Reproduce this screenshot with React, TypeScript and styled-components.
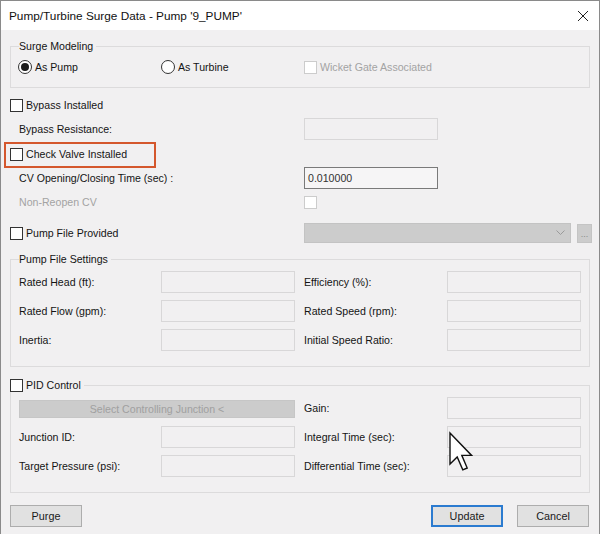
import React from 'react';
import styled, { createGlobalStyle } from 'styled-components';

const GlobalStyle = createGlobalStyle`
  html, body {
    margin: 0;
    padding: 0;
    background: #f0eff0;
  }
  * {
    box-sizing: border-box;
  }
`;

const Window = styled.div`
  position: relative;
  width: 600px;
  height: 534px;
  background: #f1f0f1;
  border: 1px solid #8a8a8a;
  border-bottom: none;
  font-family: 'Liberation Sans', Arial, sans-serif;
  font-size: 10.6px;
  color: #141414;
  overflow: hidden;
`;

const TitleBar = styled.div`
  height: 29px;
  background: #ffffff;
  display: flex;
  align-items: center;
  justify-content: space-between;
  padding: 0 10px 0 8px;
`;

const Title = styled.div`
  font-size: 11.8px;
  color: #111;
`;

const Body = styled.div`
  padding: 0 10px 0 9px;
  display: flex;
  flex-direction: column;
`;

const GroupBox = styled.div<{ $top: number; $h: number }>`
  position: relative;
  margin-top: ${(p) => p.$top}px;
  height: ${(p) => p.$h}px;
  width: 580px;
  border: 1px solid #dcdbdc;
  padding: 0 8px 0 8px;
`;

const Caption = styled.div<{ $left: number }>`
  position: absolute;
  top: -8px;
  left: ${(p) => p.$left}px;
  padding-right: 3px;
  background: #f1f0f1;
  line-height: 14px;
  display: flex;
  align-items: center;
  gap: 3px;
`;

const RadioRow = styled.div`
  margin-top: 9px;
  margin-left: -1px;
  display: grid;
  grid-template-columns: 143px 143px 1fr;
  height: 22px;
  align-items: center;
`;

const Option = styled.label<{ $disabled?: boolean }>`
  display: flex;
  align-items: center;
  gap: 3px;
  color: ${(p) => (p.$disabled ? '#a3a3a3' : '#141414')};
`;

const Radio = styled.span<{ $checked?: boolean }>`
  width: 14px;
  height: 14px;
  border-radius: 50%;
  border: 1px solid #333;
  background: #fff;
  display: flex;
  align-items: center;
  justify-content: center;
  &::after {
    content: '';
    display: ${(p) => (p.$checked ? 'block' : 'none')};
    width: 8px;
    height: 8px;
    border-radius: 50%;
    background: #1a1a1a;
  }
`;

const Check = styled.span<{ $disabled?: boolean }>`
  display: inline-block;
  width: 13px;
  height: 13px;
  border: 1px solid ${(p) => (p.$disabled ? '#cccccc' : '#333333')};
  background: #fff;
  flex-shrink: 0;
`;

const Row = styled.div<{ $top?: number }>`
  position: relative;
  margin-top: ${(p) => p.$top ?? 0}px;
  height: 24px;
  display: grid;
  grid-template-columns: 294px 1fr;
  align-items: center;
`;

const Indent = styled.span<{ $disabled?: boolean }>`
  padding-left: 9px;
  color: ${(p) => (p.$disabled ? '#a3a3a3' : '#141414')};
`;

const Highlight = styled.div`
  position: absolute;
  left: -6px;
  top: 0;
  width: 152px;
  height: 26px;
  border: 2px solid #d4572d;
  pointer-events: none;
`;

const TextBox = styled.div<{ $enabled?: boolean; $w?: number }>`
  width: ${(p) => p.$w ?? 134}px;
  height: 22px;
  border: 1px solid ${(p) => (p.$enabled ? '#7a7a7a' : '#d8d7d8')};
  background: ${(p) => (p.$enabled ? '#f6f5f6' : '#f1f0f1')};
  padding: 0 3px;
  display: flex;
  align-items: center;
  font-size: 10.6px;
  color: #333;
`;

const ComboWrap = styled.div`
  display: flex;
  align-items: center;
  gap: 6px;
`;

const Combo = styled.div`
  width: 267px;
  height: 20px;
  background: #cccccc;
  border: 1px solid #c3c3c3;
  display: flex;
  align-items: center;
  justify-content: flex-end;
  padding-right: 5px;
`;

const DotsButton = styled.div`
  width: 15px;
  height: 19px;
  background: #cccccc;
  border: 1px solid #c4c4c4;
  color: #8a8a8a;
  font-size: 9px;
  display: flex;
  align-items: flex-end;
  justify-content: center;
  padding-bottom: 3px;
  line-height: 1;
`;

const FieldGrid = styled.div`
  margin-top: 11px;
  display: grid;
  grid-template-columns: 142px 134px 9px 143px 134px;
  grid-auto-rows: 22px;
  row-gap: 7px;
  align-items: center;
`;

const FieldLabel = styled.span`
  color: #141414;
`;

const Spacer = styled.span``;

const JunctionButton = styled.div`
  grid-column: 1 / 3;
  height: 18px;
  background: #cccccc;
  color: #a0a0a0;
  display: flex;
  align-items: center;
  justify-content: center;
  border: 1px solid #c6c6c6;
  margin-top: 1px;
`;

const Footer = styled.div`
  margin-top: 12px;
  display: flex;
  align-items: center;
`;

const Button = styled.div<{ $default?: boolean }>`
  width: 72px;
  height: 22px;
  background: #e1e1e1;
  border: ${(p) => (p.$default ? '2px solid #2b7bd0' : '1px solid #adadad')};
  display: flex;
  align-items: center;
  justify-content: center;
  color: #1a1a1a;
  font-size: 10.8px;
`;

const FooterGap = styled.div`
  flex: 1;
`;

const ButtonGap = styled.div`
  width: 14px;
`;

const Cursor = styled.svg`
  position: absolute;
  left: 447px;
  top: 430px;
`;

const CloseIcon = () => (
  <svg width="12" height="12" viewBox="0 0 12 12">
    <path d="M1 1 L11 11 M11 1 L1 11" stroke="#222" strokeWidth="1" fill="none" />
  </svg>
);

const Chevron = () => (
  <svg width="9" height="6" viewBox="0 0 9 6">
    <path d="M0.5 0.5 L4.5 4.5 L8.5 0.5" stroke="#9a9a9a" strokeWidth="1" fill="none" />
  </svg>
);

const pumpFields = [
  ['Rated Head (ft):', 'Efficiency (%):'],
  ['Rated Flow (gpm):', 'Rated Speed (rpm):'],
  ['Inertia:', 'Initial Speed Ratio:'],
];

const pidFields = [
  ['Junction ID:', 'Integral Time (sec):'],
  ['Target Pressure (psi):', 'Differential Time (sec):'],
];

export default function App() {
  return (
    <>
      <GlobalStyle />
      <Window>
        <TitleBar>
          <Title>Pump/Turbine Surge Data - Pump '9_PUMP'</Title>
          <CloseIcon />
        </TitleBar>
        <Body>
          <GroupBox $top={16} $h={42}>
            <Caption $left={8}>Surge Modeling</Caption>
            <RadioRow>
              <Option>
                <Radio $checked />
                As Pump
              </Option>
              <Option>
                <Radio />
                As Turbine
              </Option>
              <Option $disabled>
                <Check $disabled />
                Wicket Gate Associated
              </Option>
            </RadioRow>
          </GroupBox>

          <Row $top={5}>
            <Option>
              <Check />
              Bypass Installed
            </Option>
          </Row>
          <Row>
            <Indent>Bypass Resistance:</Indent>
            <TextBox />
          </Row>
          <Row $top={1}>
            <Option>
              <Check />
              Check Valve Installed
            </Option>
            <Highlight />
          </Row>
          <Row>
            <Indent>CV Opening/Closing Time (sec) :</Indent>
            <TextBox $enabled>0.010000</TextBox>
          </Row>
          <Row>
            <Indent $disabled>Non-Reopen CV</Indent>
            <Check $disabled />
          </Row>
          <Row $top={7}>
            <Option>
              <Check />
              Pump File Provided
            </Option>
            <ComboWrap>
              <Combo>
                <Chevron />
              </Combo>
              <DotsButton>...</DotsButton>
            </ComboWrap>
          </Row>

          <GroupBox $top={14} $h={108}>
            <Caption $left={8}>Pump File Settings</Caption>
            <FieldGrid>
              {pumpFields.map(([a, b]) => (
                <React.Fragment key={a}>
                  <FieldLabel>{a}</FieldLabel>
                  <TextBox />
                  <Spacer />
                  <FieldLabel>{b}</FieldLabel>
                  <TextBox />
                </React.Fragment>
              ))}
            </FieldGrid>
          </GroupBox>

          <GroupBox $top={18} $h={108}>
            <Caption $left={-1}>
              <Check />
              PID Control
            </Caption>
            <FieldGrid>
              <JunctionButton>Select Controlling Junction &lt;</JunctionButton>
              <Spacer />
              <FieldLabel>Gain:</FieldLabel>
              <TextBox />
              {pidFields.map(([a, b]) => (
                <React.Fragment key={a}>
                  <FieldLabel>{a}</FieldLabel>
                  <TextBox />
                  <Spacer />
                  <FieldLabel>{b}</FieldLabel>
                  <TextBox />
                </React.Fragment>
              ))}
            </FieldGrid>
          </GroupBox>

          <Footer>
            <Button>Purge</Button>
            <FooterGap />
            <Button $default>Update</Button>
            <ButtonGap />
            <Button>Cancel</Button>
          </Footer>
        </Body>
        <Cursor width="26" height="42" viewBox="0 0 13 21">
          <path
            d="M1 1 L1 16.5 L4.6 13 L7.4 19.4 L9.6 18.5 L6.9 12.2 L11.8 12.2 Z"
            fill="#ffffff"
            stroke="#111111"
            strokeWidth="0.7"
            strokeLinejoin="miter"
          />
        </Cursor>
      </Window>
    </>
  );
}
